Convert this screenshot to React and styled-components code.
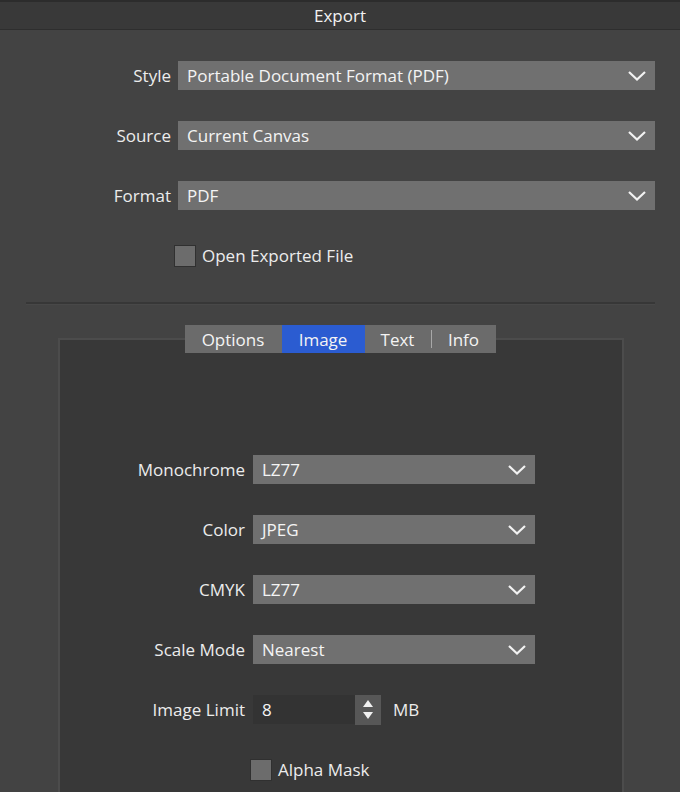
import styled, { createGlobalStyle } from "styled-components";

const GlobalStyle = createGlobalStyle`
    html, body {
        margin: 0;
        background: #434343;
        font-family: "Open Sans", "Noto Sans", sans-serif;
        color: #ececec;
        overflow: hidden;
    }
`

const Window = styled.div`
    width: 680px;
    height: 792px;
    overflow: hidden;
    background: #434343;
`

const TitleBar = styled.div`
    height: 27px;
    border-top: 2px solid #2c2c2c;
    border-bottom: 1px solid #2e2e2e;
    background: #393939;
    display: flex;
    align-items: center;
    justify-content: center;
    padding-bottom: 1px;
    box-sizing: content-box;
    height: 26px;
    font-size: 17px;
    color: #f2f2f2;
`

const Form = styled.div`
    display: grid;
    grid-template-columns: ${p => p.labelWidth}px ${p => p.fieldWidth ? p.fieldWidth + "px" : "1fr"};
    column-gap: ${p => p.gap}px;
    row-gap: 31px;
    grid-auto-rows: 29px;
    padding: ${p => p.pad};
`

const Label = styled.div`
    display: flex;
    align-items: center;
    justify-content: flex-end;
    font-size: 17px;
    color: #ececec;
`

const SelectBox = styled.div`
    display: flex;
    align-items: center;
    justify-content: space-between;
    background: #707070;
    padding: 0 8px 0 9px;
    font-size: 17px;
    color: #f4f4f4;
`

const Chevron = () => (
    <svg width="20" height="12" viewBox="0 0 20 12">
        <polyline points="2,2 10,9.5 18,2" fill="none" stroke="#f2f2f2" strokeWidth="2.2" />
    </svg>
)

const Select = ({ value }) => (
    <SelectBox>
        <span>{value}</span>
        <Chevron />
    </SelectBox>
)

const CheckRow = styled.label`
    grid-column: 2;
    display: flex;
    align-items: center;
    gap: 6px;
    margin-left: ${p => p.shift}px;
    margin-top: ${p => p.lift || 0}px;
    font-size: 17px;
    color: #ececec;
`

const Box = styled.span`
    width: 20px;
    height: 20px;
    background: #6c6c6c;
    border: 1px solid #303030;
`

const Separator = styled.div`
    margin: 32px 25px 0 26px;
    height: 2px;
    background: #373737;
    border-bottom: 1px solid #484848;
`

const TabBar = styled.div`
    display: flex;
    justify-content: center;
    margin: 20px 0 -15px;
    position: relative;
    z-index: 1;
`

const Tabs = styled.div`
    display: flex;
    background: #6b6b6b;
    height: 28px;
`

const Tab = styled.div`
    width: ${p => p.w}px;
    display: flex;
    align-items: center;
    justify-content: center;
    font-size: 17px;
    color: #f4f4f4;
    background: ${p => p.active ? "#2b5cd1" : "transparent"};
`

const Divider = styled.span`
    width: 1px;
    height: 18px;
    align-self: center;
    background: #a8a8a8;
`

const Panel = styled.div`
    margin: 0 56px 0 58px;
    height: 480px;
    background: #383838;
    border: 2px solid #4c4c4c;
    border-bottom: none;
    padding-top: 115px;
`

const NumberField = styled.div`
    display: flex;
    align-items: center;
`

const NumberInput = styled.div`
    width: 93px;
    height: 29px;
    background: #333333;
    display: flex;
    align-items: center;
    padding-left: 9px;
    font-size: 17px;
    color: #f4f4f4;
`

const Spinner = styled.div`
    width: 26px;
    height: 30px;
    background: #575757;
    display: flex;
    flex-direction: column;
    align-items: center;
    justify-content: center;
    gap: 5px;
`

const Arrow = styled.span`
    width: 0;
    height: 0;
    border-left: 5px solid transparent;
    border-right: 5px solid transparent;
    ${p => p.down ? "border-top: 7px solid #f0f0f0;" : "border-bottom: 7px solid #f0f0f0;"}
`

const Unit = styled.span`
    margin-left: 12px;
    font-size: 17px;
    color: #ececec;
`

export default function App() {
    return (
        <Window>
            <GlobalStyle />
            <TitleBar>Export</TitleBar>

            <Form labelWidth={171} gap={7} pad="31px 25px 0 0">
                <Label>Style</Label>
                <Select value="Portable Document Format (PDF)" />
                <Label>Source</Label>
                <Select value="Current Canvas" />
                <Label>Format</Label>
                <Select value="PDF" />
                <CheckRow shift={-4}>
                    <Box />
                    Open Exported File
                </CheckRow>
            </Form>

            <Separator />

            <TabBar>
                <Tabs>
                    <Tab w={97}>Options</Tab>
                    <Tab w={83} active>Image</Tab>
                    <Tab w={66}>Text</Tab>
                    <Divider />
                    <Tab w={64}>Info</Tab>
                </Tabs>
            </TabBar>

            <Panel>
                <Form labelWidth={185} fieldWidth={282} gap={8} pad="0">
                    <Label>Monochrome</Label>
                    <Select value="LZ77" />
                    <Label>Color</Label>
                    <Select value="JPEG" />
                    <Label>CMYK</Label>
                    <Select value="LZ77" />
                    <Label>Scale Mode</Label>
                    <Select value="Nearest" />
                    <Label>Image Limit</Label>
                    <NumberField>
                        <NumberInput>8</NumberInput>
                        <Spinner>
                            <Arrow />
                            <Arrow down />
                        </Spinner>
                        <Unit>MB</Unit>
                    </NumberField>
                    <CheckRow shift={-3}>
                        <Box />
                        Alpha Mask
                    </CheckRow>
                </Form>
            </Panel>
        </Window>
    )
}
